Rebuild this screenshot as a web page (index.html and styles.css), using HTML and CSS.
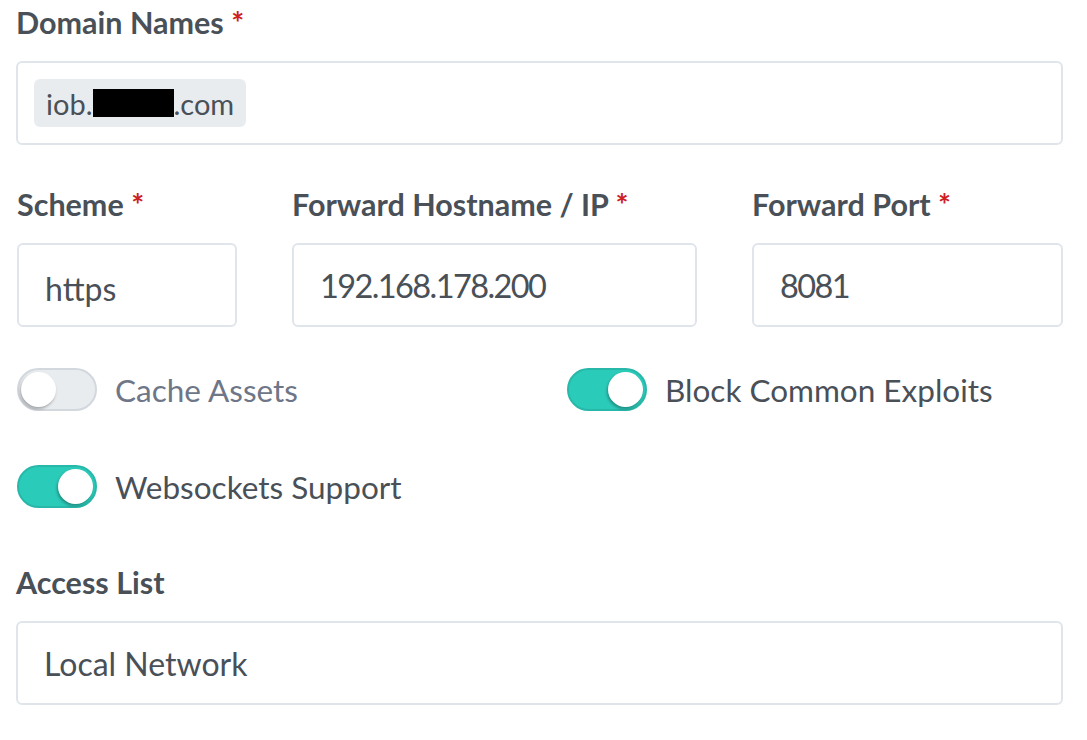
FILE: index.html
```html
<!DOCTYPE html>
<html lang="en">
<head>
    <meta charset="UTF-8">
    <meta name="viewport" content="width=device-width, initial-scale=1.0">
    <title>Proxy Host Details</title>
    <link rel="stylesheet" href="styles.css">
</head>
<body>
    <form class="fform">
        <div class="fgroup">
            <label class="flabel">Domain Names <span class="req">*</span></label>
            <div class="fcontrol tags">
                <span class="tag">iob.<span class="redact"></span>.com</span>
            </div>
        </div>

        <div class="frow">
            <div class="fgroup">
                <label class="flabel">Scheme <span class="req">*</span></label>
                <div class="fcontrol sselect">https</div>
            </div>
            <div class="fgroup">
                <label class="flabel">Forward Hostname / IP <span class="req">*</span></label>
                <div class="fcontrol num">192.168.178.200</div>
            </div>
            <div class="fgroup">
                <label class="flabel">Forward Port <span class="req">*</span></label>
                <div class="fcontrol num">8081</div>
            </div>
        </div>

        <div class="switches">
            <label class="sswitch">
                <span class="track"></span>
                <span class="desc">Cache Assets</span>
            </label>
            <label class="sswitch on">
                <span class="track"></span>
                <span class="desc">Block Common Exploits</span>
            </label>
            <label class="sswitch on">
                <span class="track"></span>
                <span class="desc">Websockets Support</span>
            </label>
        </div>

        <div class="fgroup">
            <label class="flabel">Access List</label>
            <div class="fcontrol">Local Network</div>
        </div>
    </form>
</body>
</html>
```

FILE: styles.css
```css
body {
    margin: 0;
    background: #fff;
    font-family: "Source Sans Pro", Lato, "Noto Sans", sans-serif;
    color: #495057;
}
.fform {
    padding: 0 24px 0 16px;
}
.fgroup {
    margin-bottom: 37px;
}
.flabel {
    display: block;
    font-size: 30.5px;
    font-weight: 700;
    line-height: 45px;
    margin-bottom: 16px;
    color: #495057;
}
.req {
    color: #cd201f;
}
.fcontrol {
    box-sizing: border-box;
    height: 84px;
    border: 2px solid #e0e5ec;
    border-radius: 6px;
    padding: 0 26px;
    display: flex;
    align-items: center;
    font-size: 32px;
    color: #495057;
}
.sselect {
    padding-top: 6px;
}
.num {
    font-size: 32.5px;
    letter-spacing: -1.6px;
}
.tags {
    padding: 0 16px;
}
.tag {
    display: inline-flex;
    align-items: center;
    height: 48px;
    padding: 0 12px;
    background: #e9ecef;
    border-radius: 6px;
    font-size: 29px;
}
.redact {
    display: inline-block;
    width: 81px;
    height: 28px;
    background: #000;
}
.frow {
    display: grid;
    grid-template-columns: 220px 405px 1fr;
    gap: 55px;
    padding-left: 1px;
}
.switches {
    display: grid;
    grid-template-columns: 550px 1fr;
    row-gap: 54px;
    margin-top: 4px;
    margin-bottom: 52px;
    padding-left: 1px;
}
.sswitch {
    display: flex;
    align-items: center;
    height: 43px;
    gap: 18px;
}
.track {
    position: relative;
    box-sizing: border-box;
    width: 80px;
    height: 43px;
    border-radius: 22px;
    background: #e9ecef;
    border: 2px solid #d3d8de;
    flex-shrink: 0;
}
.track::after {
    content: "";
    position: absolute;
    top: 2px;
    left: 2px;
    width: 35px;
    height: 35px;
    border-radius: 50%;
    background: #fff;
    box-shadow: -1px 2px 3px rgba(0, 0, 0, 0.3);
}
.on .track {
    background: #2bcbba;
    border-color: #27b8a9;
}
.on .track::after {
    left: auto;
    right: 2px;
}
.desc {
    font-size: 31.5px;
    color: #6e7687;
}
.on .desc {
    color: #495057;
}
```
